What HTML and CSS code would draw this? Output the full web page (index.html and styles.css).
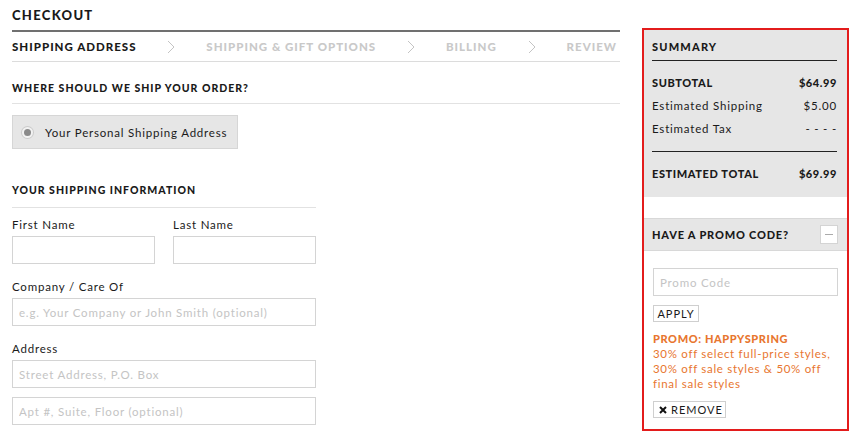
FILE: index.html
```html
<!DOCTYPE html>
<html lang="en">
<head>
  <meta charset="UTF-8">
  <title>Checkout</title>
  <link rel="stylesheet" href="styles.css">
</head>
<body>
  <div class="page">
    <div class="checkout">
      <h1 class="title">CHECKOUT</h1>
      <div class="steps">
        <span class="step active">SHIPPING ADDRESS</span>
        <svg class="chev" width="8" height="14" viewBox="0 0 8 14"><polyline points="1,1 7,7 1,13" /></svg>
        <span class="step">SHIPPING &amp; GIFT OPTIONS</span>
        <svg class="chev" width="8" height="14" viewBox="0 0 8 14"><polyline points="1,1 7,7 1,13" /></svg>
        <span class="step">BILLING</span>
        <svg class="chev" width="8" height="14" viewBox="0 0 8 14"><polyline points="1,1 7,7 1,13" /></svg>
        <span class="step">REVIEW</span>
      </div>

      <h2 class="section where">WHERE SHOULD WE SHIP YOUR ORDER?</h2>
      <div class="ship-option">
        <span class="radio"></span>
        <span>Your Personal Shipping Address</span>
      </div>

      <div class="info">
        <h2 class="section">YOUR SHIPPING INFORMATION</h2>
        <div class="row">
          <div class="field half">
            <label>First Name</label>
            <input type="text">
          </div>
          <div class="field half">
            <label>Last Name</label>
            <input type="text">
          </div>
        </div>
        <div class="field">
          <label>Company / Care Of</label>
          <input type="text" placeholder="e.g. Your Company or John Smith (optional)">
        </div>
        <div class="field">
          <label>Address</label>
          <input type="text" placeholder="Street Address, P.O. Box">
          <input type="text" class="second" placeholder="Apt #, Suite, Floor (optional)">
        </div>
      </div>
    </div>

    <div class="summary">
      <div class="totals">
        <h3 class="sum-title">SUMMARY</h3>
        <div class="lines">
          <div class="line strong"><span>SUBTOTAL</span><span>$64.99</span></div>
          <div class="line"><span>Estimated Shipping</span><span>$5.00</span></div>
          <div class="line"><span>Estimated Tax</span><span>- - - -</span></div>
        </div>
        <div class="line strong total"><span>ESTIMATED TOTAL</span><span>$69.99</span></div>
      </div>
      <div class="promo-head">
        <span>HAVE A PROMO CODE?</span>
        <span class="toggle"></span>
      </div>
      <div class="promo">
        <input type="text" placeholder="Promo Code">
        <button class="apply">APPLY</button>
        <div class="promo-msg">
          <b>PROMO: HAPPYSPRING</b>
          30% off select full-price styles, 30% off sale styles &amp; 50% off final sale styles
        </div>
        <button class="remove">
          <svg width="8" height="8" viewBox="0 0 8 8"><path d="M1 1L7 7M7 1L1 7" /></svg>
          REMOVE
        </button>
      </div>
    </div>
  </div>
</body>
</html>
```

FILE: styles.css
```css
*{
  margin: 0;
  padding: 0;
  box-sizing: border-box;
}
body{
  font-family: "Lato", "Liberation Sans", sans-serif;
  color: #1a1a1a;
  background: #fff;
}
.page{
  display: flex;
  padding: 0 11px 0 12px;
  gap: 22px;
}
.checkout{
  width: 608px;
}
.title{
  font-size: 13px;
  font-weight: 900;
  letter-spacing: 1.3px;
  line-height: 18px;
  padding: 6px 0 6px;
  border-bottom: 2px solid #707070;
}
.steps{
  display: flex;
  justify-content: space-between;
  align-items: center;
  height: 30px;
  padding-right: 3px;
  border-bottom: 1px solid #dcdcdc;
}
.step{
  font-size: 11.5px;
  font-weight: 900;
  letter-spacing: 1px;
  color: #c9c9c9;
}
.step.active{
  color: #1a1a1a;
}
.chev polyline{
  fill: none;
  stroke: #c4c4c4;
  stroke-width: 1;
}
.section{
  font-size: 10.5px;
  font-weight: 900;
  letter-spacing: 1px;
  line-height: 14px;
  padding-bottom: 10px;
  border-bottom: 1px solid #e2e2e2;
}
.where{
  padding-top: 19px;
  padding-bottom: 8px;
}
.ship-option{
  display: flex;
  align-items: center;
  width: 226px;
  height: 34px;
  margin-top: 11px;
  padding-left: 11px;
  background: #e6e6e6;
  border: 1px solid #d6d6d6;
  font-size: 11.5px;
  letter-spacing: 0.8px;
}
.radio{
  width: 7px;
  height: 7px;
  margin-right: 14px;
  border-radius: 50%;
  background: #8a8a8a;
  box-shadow: 0 0 0 2px #f2f2f2, 0 0 0 3px #cbcbcb;
}
.info{
  width: 304px;
  margin-top: 34px;
}
.row{
  display: flex;
  justify-content: space-between;
}
.field{
  margin-top: 15px;
}
.row .field{
  margin-top: 9px;
}
.field.half{
  width: 143px;
}
label{
  display: block;
  font-size: 11.5px;
  letter-spacing: 0.8px;
  line-height: 15px;
  margin-bottom: 4px;
}
input{
  display: block;
  width: 100%;
  height: 28px;
  border: 1px solid #d4d4d4;
  padding: 0 6px;
  font-family: inherit;
  font-size: 11.5px;
  letter-spacing: 0.8px;
  outline: none;
}
input::placeholder{
  color: #c4c4c4;
}
.field .second{
  margin-top: 9px;
}
.summary{
  width: 207px;
  height: 403px;
  margin-top: 28px;
  border: 2px solid #e31c1c;
}
.totals{
  background: #e6e6e6;
  padding: 9px 10px 15px 8px;
}
.sum-title{
  font-size: 11px;
  font-weight: 900;
  letter-spacing: 1.2px;
  line-height: 16px;
  padding-bottom: 5px;
  border-bottom: 1px solid #222;
}
.lines{
  padding: 10px 0 11px;
  border-bottom: 1px solid #222;
}
.line{
  display: flex;
  justify-content: space-between;
  font-size: 11.5px;
  letter-spacing: 0.8px;
  line-height: 23px;
}
.line.strong{
  font-size: 11px;
  font-weight: 900;
  letter-spacing: 0.6px;
}
.total{
  margin-top: 14px;
  line-height: 16px;
}
.promo-head{
  display: flex;
  justify-content: space-between;
  align-items: center;
  height: 33px;
  margin-top: 21px;
  padding: 0 9px 0 8px;
  background: #e6e6e6;
  border-top: 1px solid #d8d8d8;
  border-bottom: 1px solid #d8d8d8;
  font-size: 11px;
  font-weight: 900;
  letter-spacing: 0.8px;
}
.toggle{
  position: relative;
  width: 18px;
  height: 19px;
  background: #fff;
  border: 1px solid #d4d4d4;
}
.toggle::after{
  content: "";
  position: absolute;
  left: 4px;
  top: 8px;
  width: 8px;
  height: 1px;
  background: #aaa;
}
.promo{
  padding: 17px 9px 0 9px;
}
.promo input{
  height: 28px;
  padding: 0 6px;
}
button{
  display: block;
  font-family: inherit;
  background: #fff;
  border: 1px solid #cfcfcf;
  color: #1a1a1a;
  cursor: pointer;
}
.apply{
  margin-top: 9px;
  width: 46px;
  height: 17px;
  font-size: 11px;
  letter-spacing: 1px;
}
.promo-msg{
  margin-top: 9px;
  color: #e8762f;
  font-size: 11.5px;
  letter-spacing: 0.7px;
  line-height: 15px;
}
.promo-msg b{
  display: block;
  font-size: 11px;
  font-weight: 900;
  letter-spacing: 0.6px;
}
.remove{
  display: flex;
  align-items: center;
  gap: 4px;
  margin-top: 10px;
  width: 73px;
  height: 17px;
  padding-left: 5px;
  font-size: 11px;
  letter-spacing: 1px;
}
.remove path{
  stroke: #111;
  stroke-width: 2;
}
```
